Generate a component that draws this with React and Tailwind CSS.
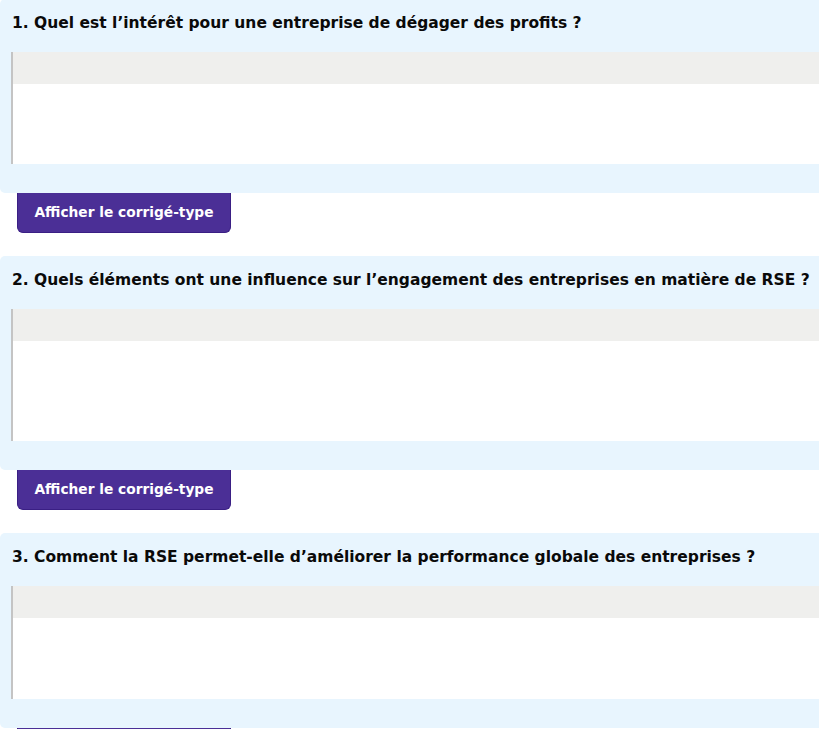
import React from "react";

const questions = [
  { n: "1.", text: "Quel est l’intérêt pour une entreprise de dégager des profits ?", h: "h-[80px]", first: true },
  { n: "2.", text: "Quels éléments ont une influence sur l’engagement des entreprises en matière de RSE ?", h: "h-[100px]" },
  { n: "3.", text: "Comment la RSE permet-elle d’améliorer la performance globale des entreprises ?", h: "h-[81px]" },
];

function Question({ q }) {
  return (
    <div className={q.first ? "-mt-[1px]" : ""}>
      <div className="w-[830px] bg-[#e8f5fe] rounded-[5px]">
        <div className="h-[53px] pt-[14px] pl-[12px] text-[15.5px] leading-[20px] font-bold text-[#0a0a0a] whitespace-nowrap">
          {q.n} {q.text}
        </div>
        <div className="ml-[11px] border-l-2 border-[#c4c4c4]">
          <div className="h-[32px] bg-[#efefed]"></div>
          <div className={`${q.h} bg-white`}></div>
        </div>
        <div className="h-[29px]"></div>
      </div>
      <div className="ml-[17px] w-[214px] h-[40px] bg-[#4b2f96] border-x border-b border-[#3a1f84] rounded-b-[6px] flex items-center justify-center text-white font-bold text-[13.75px]">
        Afficher le corrigé-type
      </div>
      <div className="h-[23px]"></div>
    </div>
  );
}

export default function App() {
  return (
    <div className="w-[819px] h-[729px] overflow-hidden bg-white" style={{ fontFamily: '"DejaVu Sans", "Noto Sans", sans-serif' }}>
      {questions.map((q) => (
        <Question key={q.n} q={q} />
      ))}
    </div>
  );
}
